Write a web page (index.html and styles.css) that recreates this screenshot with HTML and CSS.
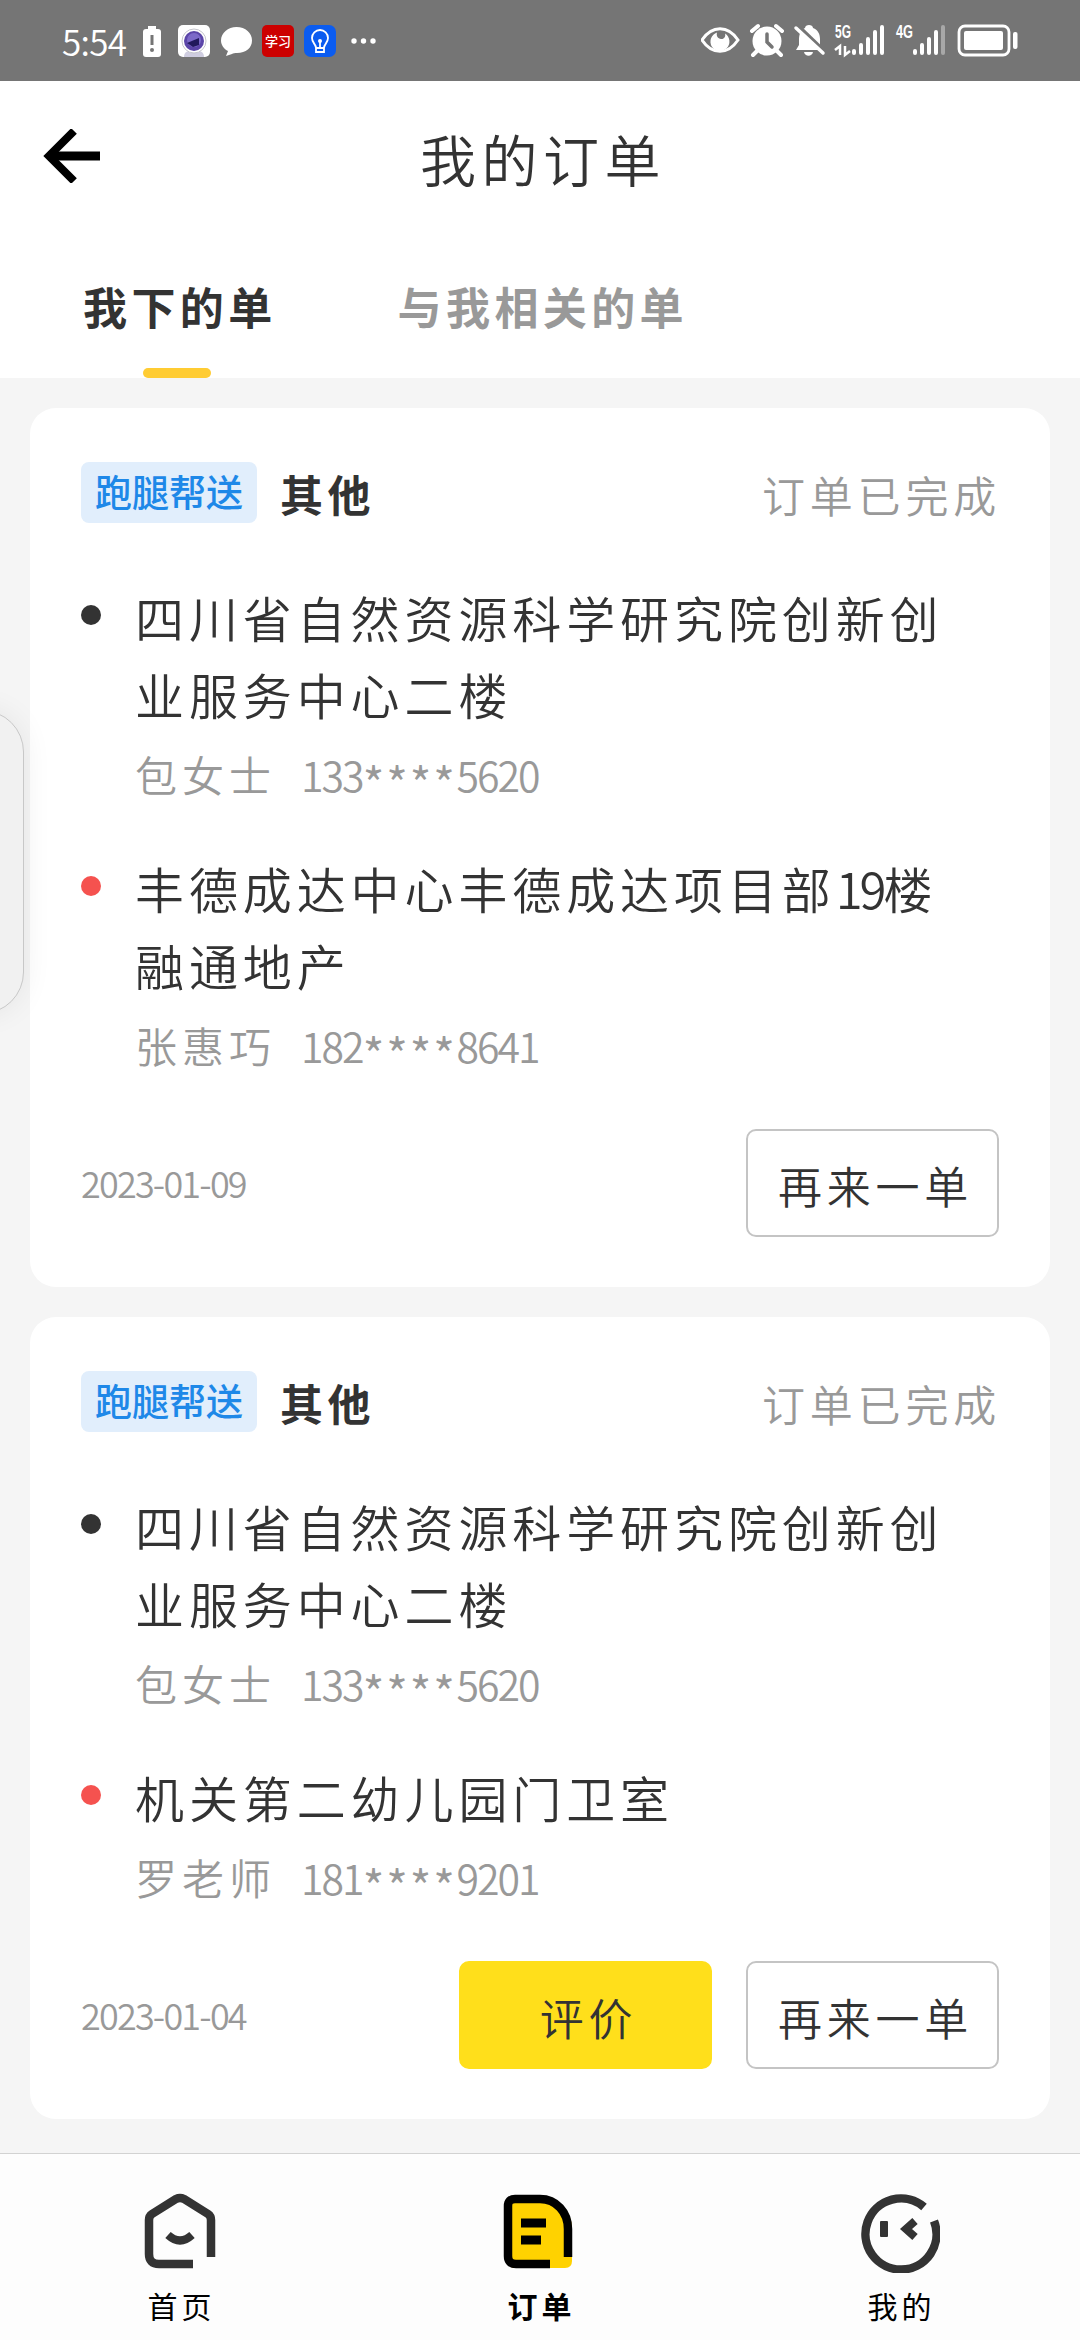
FILE: index.html
```html
<!DOCTYPE html>
<html lang="zh-CN">
<head>
    <meta charset="UTF-8">
    <title>我的订单</title>
    <link rel="stylesheet" href="styles.css">
</head>
<body>
    <div class="status-bar">
        <span class="time">5:54</span>
        <svg class="status-left" width="240" height="81" viewBox="140 0 240 81">
            <!-- battery warning -->
            <rect x="148" y="26" width="8" height="3" fill="#fff"/>
            <rect x="143" y="29" width="18" height="28" rx="3" fill="#fff"/>
            <path d="M152 35v10" stroke="#757575" stroke-width="3"/>
            <circle cx="152" cy="50" r="2" fill="#757575"/>
            <!-- camera -->
            <rect x="178" y="25" width="32" height="32" rx="5" fill="#fff"/>
            <path d="M184 57c0-5 4-7 10-7s10 2 10 7z" fill="#cfcde0"/>
            <circle cx="194" cy="41" r="12" fill="#fff" stroke="#c5c5cc" stroke-width="1"/>
            <circle cx="194" cy="41" r="10" fill="#5b45a8"/>
            <circle cx="194" cy="40" r="7" fill="#7c69c8"/>
            <path d="M187 43l12-5v7l-6 2z" fill="#21195c"/>
            <!-- message -->
            <path d="M236.500 27c9 0 15.500 6 15.500 13.500S246 53 237 53c-2 0-4 0-5 1l-6 2 2-5c-4-2-7-6-7-10.500C221 33 228 27 236.500 27z" fill="#fff"/>
            <!-- study app -->
            <rect x="262" y="25" width="32" height="32" rx="5" fill="#cc0000"/>
            <text class="app-text" x="265" y="46">学习</text>
            <!-- bulb app -->
            <rect x="304" y="25" width="32" height="32" rx="7" fill="#0b5cf0"/>
            <path d="M316 48c0-4-4-5-4-10a8 8 0 0 1 16 0c0 5-4 6-4 10zM316 48v4h8v-4M320 42v6" fill="none" stroke="#fff" stroke-width="1.800"/>
            <circle cx="320" cy="41" r="2" fill="#fff"/>
            <circle cx="354" cy="41" r="2.700" fill="#fff"/>
            <circle cx="363.500" cy="41" r="2.700" fill="#fff"/>
            <circle cx="373" cy="41" r="2.700" fill="#fff"/>
        </svg>
        <svg class="status-right" width="320" height="81" viewBox="700 0 320 81">
            <!-- eye -->
            <path d="M701 40c10-15 26-15 36 0c-10 15-26 15-36 0z" fill="none" stroke="#fff" stroke-width="3"/>
            <path d="M716 32.500a9.500 9.500 0 1 0 8 1c1 3-1 6-4 5.500s-5-3-4-6.500z" fill="#fff"/>
            <!-- alarm -->
            <circle cx="766" cy="41" r="14.500" fill="#fff"/>
            <path d="M751 31l6-5M781 31l-6-5M756 51l-4 4M776 51l4 4" stroke="#fff" stroke-width="4" stroke-linecap="round"/>
            <path d="M766 34v8l5 5" fill="none" stroke="#757575" stroke-width="3.500" stroke-linecap="round"/>
            <!-- muted bell -->
            <path d="M808 25c2 0 4 1 4 3 5 2 7 6 7 11v6l2 5h-26l3-5v-6c0-5 2-9 6-11 0-2 2-3 4-3z" fill="#fff"/>
            <path d="M803 52h9c-1 5-8 5-9 0z" fill="#fff"/>
            <path d="M796 25l29 28" stroke="#757575" stroke-width="4"/>
            <path d="M795 28l27 25" stroke="#fff" stroke-width="3.500" stroke-linecap="round"/>
            <!-- sim 1 -->
            <text class="net-text" x="834" y="38" textLength="16" lengthAdjust="spacingAndGlyphs">5G</text>
            <path d="M834 50l5-4v9M849 51l-5 4v-9" fill="none" stroke="#fff" stroke-width="2.500"/>
            <path d="M853 51v2M860 45v8M867 39v14M874 32v21M881 27v26" stroke="#fff" stroke-width="4" stroke-linecap="round"/>
            <!-- sim 2 -->
            <text class="net-text" x="895" y="38" textLength="17" lengthAdjust="spacingAndGlyphs">4G</text>
            <path d="M914 51v2M921 45v8M928 39v14M935 32v21" stroke="#fff" stroke-width="4" stroke-linecap="round"/>
            <path d="M942 27v26" stroke="#a8a8a8" stroke-width="4" stroke-linecap="round"/>
            <!-- battery -->
            <rect x="958" y="26" width="50" height="29" rx="6" fill="none" stroke="#fff" stroke-width="2.800"/>
            <rect x="963" y="31" width="39" height="19" rx="2" fill="#fff"/>
            <rect x="1012" y="32" width="4.500" height="17" rx="2" fill="#fff"/>
        </svg>
    </div>

    <div class="header">
        <div class="nav">
            <svg class="back" width="58" height="54" viewBox="0 0 58 54">
                <path d="M31 2L6 27l25 25" fill="none" stroke="#000" stroke-width="8"/>
                <path d="M5 27h52" stroke="#000" stroke-width="9"/>
            </svg>
            <h1 class="title">我的订单</h1>
        </div>
        <div class="tabs">
            <div class="tab active">我下的单</div>
            <div class="tab">与我相关的单</div>
        </div>
    </div>

    <div class="list">
        <div class="card">
            <div class="card-head">
                <span class="badge">跑腿帮送</span>
                <span class="kind">其他</span>
                <span class="state">订单已完成</span>
            </div>
            <div class="stop from">
                <div class="address">四川省自然资源科学研究院创新创业服务中心二楼</div>
                <div class="person"><span>包女士</span><span class="phone">133<i>****</i>5620</span></div>
            </div>
            <div class="stop to">
                <div class="address">丰德成达中心丰德成达项目部<span class="num">19</span>楼<br>融通地产</div>
                <div class="person"><span>张惠巧</span><span class="phone">182<i>****</i>8641</span></div>
            </div>
            <div class="card-foot">
                <span class="date">2023-01-09</span>
                <button class="btn">再来一单</button>
            </div>
        </div>

        <div class="card">
            <div class="card-head">
                <span class="badge">跑腿帮送</span>
                <span class="kind">其他</span>
                <span class="state">订单已完成</span>
            </div>
            <div class="stop from">
                <div class="address">四川省自然资源科学研究院创新创业服务中心二楼</div>
                <div class="person"><span>包女士</span><span class="phone">133<i>****</i>5620</span></div>
            </div>
            <div class="stop to">
                <div class="address">机关第二幼儿园门卫室</div>
                <div class="person"><span>罗老师</span><span class="phone">181<i>****</i>9201</span></div>
            </div>
            <div class="card-foot">
                <span class="date">2023-01-04</span>
                <button class="btn primary">评价</button>
                <button class="btn">再来一单</button>
            </div>
        </div>
    </div>

    <div class="side-handle"></div>

    <div class="tab-bar">
        <div class="tab-item">
            <svg width="80" height="80" viewBox="0 0 80 80">
                <path d="M53 71H19q-10 0-10-10V27q0-4 3-6L36 6q4-2 8 0l24 15q3 2 3 6v37" fill="none" stroke="#333" stroke-width="8.500"/>
                <path d="M28 42q12 11 24 0" fill="none" stroke="#333" stroke-width="8"/>
            </svg>
            <span>首页</span>
        </div>
        <div class="tab-item current">
            <svg width="80" height="80" viewBox="0 0 80 80">
                <path d="M8 4h32c18 0 32 14 32 32v32q0 7-7 7H12z" fill="#ffd200"/>
                <path d="M50 71H16q-8 0-8-8V13q0-7 7-7h25c16 0 28 13 28 30v28" fill="none" stroke="#000" stroke-width="8.500"/>
                <path d="M21 30h25M21 47h20" stroke="#000" stroke-width="9"/>
            </svg>
            <span>订单</span>
        </div>
        <div class="tab-item">
            <svg width="80" height="80" viewBox="0 0 80 80">
                <path d="M64 14A35.500 35.500 0 1 0 74 28" fill="none" stroke="#333" stroke-width="8.500"/>
                <rect x="20" y="28" width="8" height="16" rx="1" fill="#333"/>
                <path d="M55 28l-9 8 9 8" fill="none" stroke="#333" stroke-width="8"/>
            </svg>
            <span>我的</span>
        </div>
    </div>
</body>
</html>
```
FILE: styles.css
```css
* { box-sizing: border-box; }

body {
    margin: 0;
    width: 1080px;
    height: 2340px;
    display: flex;
    flex-direction: column;
    position: relative;
    overflow: hidden;
    background: #f5f5f5;
    color: #333;
    font-family: "Noto Sans CJK SC", sans-serif;
    font-weight: 350;
}
svg { display: block; }

/* status bar */
.status-bar {
    height: 81px;
    padding: 0 59px 0 62px;
    display: flex;
    align-items: center;
    background: #757575;
    color: #fff;
}
.time {
    width: 78px;
    font-size: 35px;
    line-height: 40px;
    letter-spacing: -0.7px;
}
.status-right { margin-left: auto; }
.app-text { font-size: 13px; font-weight: 500; fill: #fff; }
.net-text {
    font-family: "Liberation Sans", sans-serif;
    font-size: 18px;
    font-weight: bold;
    fill: #fff;
}

/* header */
.header { background: #fff; height: 297px; }
.nav {
    height: 150px;
    padding: 0 43px;
    display: grid;
    grid-template-columns: 58px 1fr 58px;
    align-items: center;
}
.title {
    margin: 0;
    padding-top: 4px;
    font-size: 56px;
    line-height: 80px;
    font-weight: 350;
    letter-spacing: 5.5px;
    text-indent: 6px;
    text-align: center;
}
.tabs {
    height: 147px;
    padding: 0 83px;
    display: flex;
    gap: 121px;
    align-items: flex-start;
}
.tab {
    margin-top: 45px;
    font-size: 44px;
    line-height: 60px;
    font-weight: bold;
    letter-spacing: 4.4px;
    color: #999;
}
.tab.active { color: #333; }
.tab.active::after {
    content: "";
    display: block;
    width: 68px;
    height: 10px;
    margin: 32px 0 0 60px;
    border-radius: 5px;
    background: #ffcc33;
}

/* orders */
.list {
    flex: 1;
    padding: 30px;
    display: flex;
    flex-direction: column;
    gap: 30px;
}
.card {
    padding: 54px 51px 50px;
    border-radius: 26px;
    background: #fff;
}
.card-head { display: flex; align-items: center; height: 61px; }
.badge {
    width: 176px;
    height: 61px;
    line-height: 58px;
    border-radius: 8px;
    background: #e1eefc;
    color: #1e88e8;
    font-size: 37px;
    font-weight: 500;
    text-align: center;
}
.kind {
    margin-left: 23px;
    font-size: 43px;
    line-height: 60px;
    font-weight: bold;
    letter-spacing: 4.5px;
}
.state {
    margin: 2px -2px 0 auto;
    font-size: 43px;
    line-height: 60px;
    letter-spacing: 4.8px;
    color: #999;
}
.stop { position: relative; padding-left: 54px; }
.stop.from { margin-top: 55px; }
.stop.to { margin-top: 45px; }
.stop::before {
    content: "";
    position: absolute;
    left: 0;
    top: 27px;
    width: 20px;
    height: 20px;
    border-radius: 50%;
    background: #333;
}
.stop.to::before { background: #f5524f; }
.address {
    width: 824px;
    font-size: 49px;
    line-height: 77px;
    letter-spacing: 4.9px;
}
.num { letter-spacing: -3px; }
.person {
    margin-top: 12px;
    display: flex;
    gap: 25px;
    font-size: 42px;
    line-height: 60px;
    letter-spacing: 5px;
    color: #999;
}
.phone { font-size: 41px; letter-spacing: -2px; }
.phone i {
    font-style: normal;
    font-size: 48px;
    line-height: 1px;
    letter-spacing: 1.4px;
    vertical-align: -11px;
}
.card-foot {
    margin-top: 54px;
    height: 108px;
    display: flex;
    align-items: center;
    gap: 34px;
}
.date {
    margin: -3px auto 0 0;
    font-size: 36px;
    letter-spacing: -1.8px;
    color: #999;
}
.btn {
    width: 253px;
    height: 108px;
    padding: 4px 0 0 6px;
    border: 2px solid #c4c4c4;
    border-radius: 10px;
    background: #fff;
    color: #333;
    font-family: inherit;
    font-size: 44px;
    font-weight: 350;
    letter-spacing: 4.8px;
}
.btn.primary { background: #ffdf1b; border-color: #ffdf1b; }

/* drawer handle on the screen edge */
.side-handle {
    position: absolute;
    left: -60px;
    top: 710px;
    width: 84px;
    height: 304px;
    border: 1px solid #c8c8c8;
    border-radius: 50px;
    background: #f1f1f1;
    box-shadow: 0 0 30px rgba(0, 0, 0, 0.07);
}

/* bottom bar */
.tab-bar {
    height: 187px;
    display: flex;
    border-top: 1px solid #d2d2d2;
    background: #fdfdfd;
}
.tab-item {
    flex: 1;
    padding-top: 39px;
    display: flex;
    flex-direction: column;
    align-items: center;
    color: #000;
    font-size: 30px;
    line-height: 40px;
    letter-spacing: 4px;
    font-weight: 400;
}
.tab-item span { margin: 12px 0 0 3px; }
.tab-item.current { font-weight: bold; }
```
